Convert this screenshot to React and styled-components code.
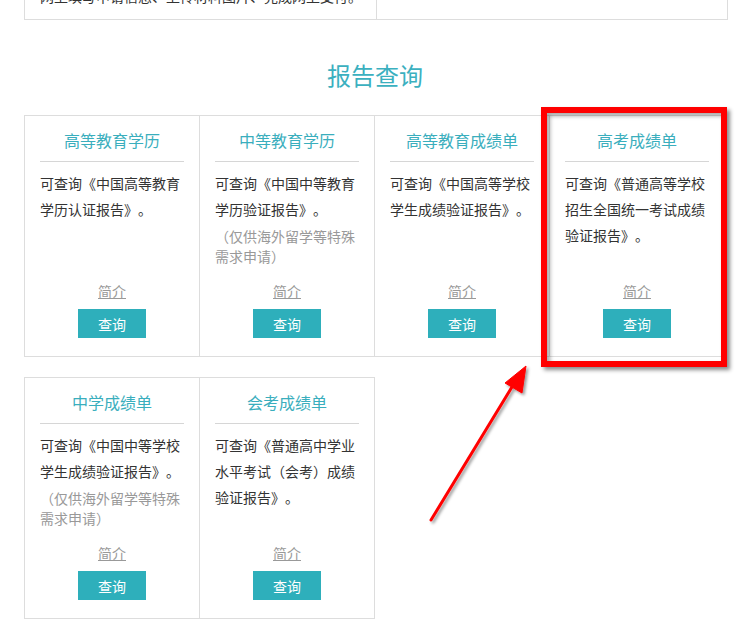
import React from 'react';
import styled, { createGlobalStyle } from 'styled-components';

const GlobalStyle = createGlobalStyle`
  html, body {
    margin: 0;
    padding: 0;
    background: #fff;
  }
  body {
    font-family: 'Liberation Sans', 'Noto Sans CJK SC', sans-serif;
    text-spacing-trim: space-all;
  }
`;

const Page = styled.div`
  position: relative;
  width: 754px;
  height: 635px;
  overflow: hidden;
  padding: 0 0 0 24px;
  box-sizing: border-box;
`;

const TopTable = styled.div`
  display: flex;
  width: 702px;
  margin-top: -14px;
  border: 1px solid #ddd;
  border-top: none;
`;

const TopCell = styled.div`
  flex: 1;
  padding: 0 0 11px 15px;
  font-size: 14px;
  line-height: 22px;
  color: #333;
  white-space: nowrap;
  overflow: hidden;
  & + & {
    border-left: 1px solid #ddd;
  }
`;

const SectionTitle = styled.h2`
  margin: 40px 0 21px;
  width: 702px;
  text-align: center;
  font-size: 24px;
  line-height: 34px;
  font-weight: normal;
  color: #3bb0bf;
`;

const Row = styled.div`
  display: flex;
  & + & {
    margin-top: 20px;
  }
`;

const Card = styled.div`
  width: 176px;
  height: 242px;
  box-sizing: border-box;
  border: 1px solid #ddd;
  padding: 0 15px 18px;
  display: flex;
  flex-direction: column;
  & + & {
    margin-left: -1px;
  }
`;

const CardTitle = styled.div`
  margin-top: 16px;
  padding-bottom: 9px;
  border-bottom: 1px solid #d6d6d6;
  text-align: center;
  font-size: 16px;
  line-height: 20px;
  color: #3aaebd;
`;

const Desc = styled.p`
  margin: 9px 0 0;
  font-size: 14px;
  line-height: 26px;
  color: #333;
`;

const Note = styled.p`
  margin: 4px 0 0;
  font-size: 14px;
  line-height: 20px;
  color: #999;
`;

const Footer = styled.div`
  margin-top: auto;
  display: flex;
  flex-direction: column;
  align-items: center;
  gap: 7px;
`;

const Intro = styled.a`
  font-size: 14px;
  line-height: 20px;
  color: #999;
  text-decoration: underline;
  cursor: pointer;
`;

const QueryButton = styled.button`
  width: 68px;
  height: 29px;
  border: none;
  background: #2eafbb;
  color: #fff;
  font-family: inherit;
  font-size: 14px;
  padding: 0;
  cursor: pointer;
`;

const Highlight = styled.div`
  position: absolute;
  left: 541px;
  top: 107px;
  width: 186px;
  height: 260px;
  box-sizing: border-box;
  border: 6px solid #ff0000;
  box-shadow: 3px 3px 4px rgba(0, 0, 0, 0.45), inset 3px 3px 4px rgba(0, 0, 0, 0.35);
  pointer-events: none;
`;

const ArrowLayer = styled.svg`
  position: absolute;
  left: 0;
  top: 0;
  pointer-events: none;
`;

const row1 = [
  { title: '高等教育学历', desc: '可查询《中国高等教育学历认证报告》。' },
  {
    title: '中等教育学历',
    desc: '可查询《中国中等教育学历验证报告》。',
    note: '（仅供海外留学等特殊需求申请）',
  },
  { title: '高等教育成绩单', desc: '可查询《中国高等学校学生成绩验证报告》。' },
  { title: '高考成绩单', desc: '可查询《普通高等学校招生全国统一考试成绩验证报告》。' },
];

const row2 = [
  {
    title: '中学成绩单',
    desc: '可查询《中国中等学校学生成绩验证报告》。',
    note: '（仅供海外留学等特殊需求申请）',
  },
  { title: '会考成绩单', desc: '可查询《普通高中学业水平考试（会考）成绩验证报告》。' },
];

function ReportCard({ title, desc, note }) {
  return (
    <Card>
      <CardTitle>{title}</CardTitle>
      <Desc>{desc}</Desc>
      {note && <Note>{note}</Note>}
      <Footer>
        <Intro>简介</Intro>
        <QueryButton>查询</QueryButton>
      </Footer>
    </Card>
  );
}

function App() {
  return (
    <>
      <GlobalStyle />
      <Page>
        <TopTable>
          <TopCell>网上填写申请信息、上传材料图片、完成网上支付。</TopCell>
          <TopCell />
        </TopTable>
        <SectionTitle>报告查询</SectionTitle>
        <Row>
          {row1.map((c) => (
            <ReportCard key={c.title} {...c} />
          ))}
        </Row>
        <Row>
          {row2.map((c) => (
            <ReportCard key={c.title} {...c} />
          ))}
        </Row>
        <Highlight />
        <ArrowLayer width="754" height="635" viewBox="0 0 754 635">
          <defs>
            <filter id="sh" x="-20%" y="-20%" width="140%" height="140%">
              <feDropShadow dx="2" dy="2" stdDeviation="1.5" floodColor="#000" floodOpacity="0.4" />
            </filter>
          </defs>
          <g filter="url(#sh)" fill="#ff0000" stroke="#ff0000">
            <line x1="431" y1="520" x2="515" y2="382" strokeWidth="3" strokeLinecap="round" />
            <polygon points="526,366 522,393 505,383" strokeWidth="1" strokeLinejoin="round" />
          </g>
        </ArrowLayer>
      </Page>
    </>
  );
}

export default App;
